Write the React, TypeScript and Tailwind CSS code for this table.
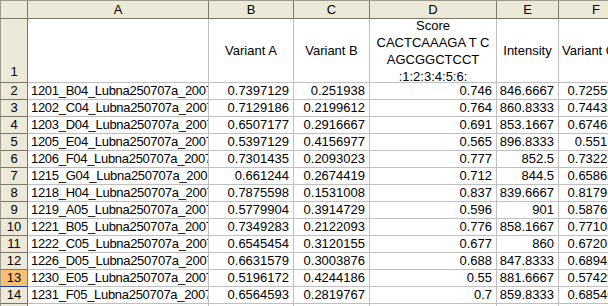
const cols = [
  { key: 'A', w: 'w-[181px]' },
  { key: 'B', w: 'w-[85px]' },
  { key: 'C', w: 'w-[76px]' },
  { key: 'D', w: 'w-[127px]' },
  { key: 'E', w: 'w-[62px]' },
  { key: 'F', w: 'w-[75px]' },
];

const rows: string[][] = [
  ['1201_B04_Lubna250707a_2007-07-25', '0.7397129', '0.251938', '0.746', '846.6667', '0.7255639'],
  ['1202_C04_Lubna250707a_2007-07-25', '0.7129186', '0.2199612', '0.764', '860.8333', '0.7443182'],
  ['1203_D04_Lubna250707a_2007-07-25', '0.6507177', '0.2916667', '0.691', '853.1667', '0.6746988'],
  ['1205_E04_Lubna250707a_2007-07-25', '0.5397129', '0.4156977', '0.565', '896.8333', '0.551515'],
  ['1206_F04_Lubna250707a_2007-07-25', '0.7301435', '0.2093023', '0.777', '852.5', '0.7322835'],
  ['1215_G04_Lubna250707a_2007-07-25', '0.661244', '0.2674419', '0.712', '844.5', '0.6586345'],
  ['1218_H04_Lubna250707a_2007-07-25', '0.7875598', '0.1531008', '0.837', '839.6667', '0.8179372'],
  ['1219_A05_Lubna250707a_2007-07-25', '0.5779904', '0.3914729', '0.596', '901', '0.5876923'],
  ['1221_B05_Lubna250707a_2007-07-25', '0.7349283', '0.2122093', '0.776', '858.1667', '0.7710843'],
  ['1222_C05_Lubna250707a_2007-07-25', '0.6545454', '0.3120155', '0.677', '860', '0.6720207'],
  ['1226_D05_Lubna250707a_2007-07-25', '0.6631579', '0.3003876', '0.688', '847.8333', '0.6894273'],
  ['1230_E05_Lubna250707a_2007-07-25', '0.5196172', '0.4244186', '0.55', '881.6667', '0.5742972'],
  ['1231_F05_Lubna250707a_2007-07-25', '0.6564593', '0.2819767', '0.7', '859.8333', '0.6854067'],
];

const RowHead = ({ n, selected, h }: { n: number | string; selected?: boolean; h: string }) => (
  <div
    className={`${h} w-[28px] shrink-0 border-l border-l-[#9d9b8c] border-r border-r-[#7b7868] flex justify-center ${
      selected ? 'bg-[#f9bf74] border-b border-b-[#1c3f95]' : 'bg-[#ece9d8] border-b border-b-[#7b7868]'
    }`}
  >
    {n}
  </div>
);

export default function App() {
  return (
    <div className="w-[608px] h-[306px] overflow-hidden bg-white text-black text-[13px] leading-[16px] font-['Liberation_Sans',Arial,sans-serif]">
      <div className="w-max">
        {/* column letters */}
        <div className="flex h-[19px] border-t border-t-[#9d9b8c] bg-[#ece9d8]">
          <div className="w-[28px] shrink-0 border-l border-l-[#9d9b8c] border-r border-b border-[#7b7868]" />
          {cols.map((c) => (
            <div key={c.key} className={`${c.w} shrink-0 border-r border-b border-[#7b7868] flex items-center justify-center`}>
              {c.key}
            </div>
          ))}
        </div>

        {/* row 1: headings */}
        <div className="flex">
          <RowHead n={1} h="h-[64px] items-end pb-[2px]" />
          <div className="w-[181px] h-[64px] shrink-0 border-r border-b border-[#c0c0c0]" />
          <div className="w-[85px] h-[64px] shrink-0 border-r border-b border-[#c0c0c0] flex items-center justify-center">
            Variant A
          </div>
          <div className="w-[76px] h-[64px] shrink-0 border-r border-b border-[#c0c0c0] flex items-center justify-center">
            Variant B
          </div>
          <div className="w-[127px] h-[64px] shrink-0 border-r border-b border-[#c0c0c0] flex flex-col items-center justify-center leading-[17px] overflow-hidden">
            <span>Score</span>
            <span>CACTCAAAGA T C</span>
            <span>AGCGGCTCCT</span>
            <span>:1:2:3:4:5:6:</span>
          </div>
          <div className="w-[62px] h-[64px] shrink-0 border-r border-b border-[#c0c0c0] flex items-center justify-center">
            Intensity
          </div>
          <div className="w-[75px] h-[64px] shrink-0 border-r border-b border-[#c0c0c0] flex items-center pl-[3px]">
            Variant C
          </div>
        </div>

        {/* data rows */}
        {rows.map((r, i) => (
          <div key={i} className="flex">
            <RowHead n={i + 2} selected={i + 2 === 13} h="h-[17px] items-center" />
            {r.map((v, j) => (
              <div
                key={j}
                className={`${cols[j].w} h-[17px] shrink-0 border-r border-b border-[#c0c0c0] flex items-center overflow-hidden whitespace-nowrap ${
                  j === 0 ? 'pl-[3px] tracking-[-0.3px]' : 'justify-end pr-[4px]'
                }`}
              >
                {v}
              </div>
            ))}
          </div>
        ))}

        {/* row 15, cut off */}
        <div className="flex">
          <RowHead n={15} h="h-[17px] items-center" />
          {cols.map((c) => (
            <div key={c.key} className={`${c.w} h-[17px] shrink-0 border-r border-[#c0c0c0]`} />
          ))}
        </div>
      </div>
    </div>
  );
}
